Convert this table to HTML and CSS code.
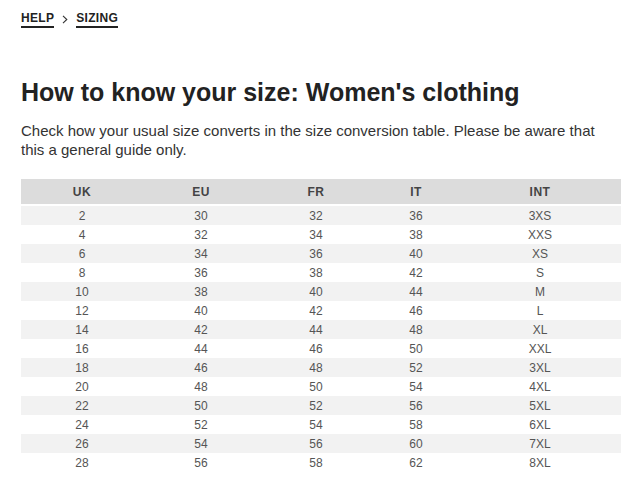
FILE: index.html
```html
<!DOCTYPE html>
<html lang="en">
<head>
<meta charset="utf-8">
<title>Sizing</title>
<link rel="stylesheet" href="styles.css">
</head>
<body>
<div class="page">
  <nav class="crumbs">
    <a class="crumb" href="#">HELP</a>
    <svg class="chev" width="6" height="9" viewBox="0 0 6 9"><path d="M1 0.8 L4.8 4.5 L1 8.2" fill="none" stroke="#333" stroke-width="1.1"/></svg>
    <a class="crumb" href="#">SIZING</a>
  </nav>
  <h1 class="title">How to know your size: Women's clothing</h1>
  <p class="intro">Check how your usual size converts in the size conversion table. Please be aware that this a general guide only.</p>
  <table class="sizes">
    <colgroup><col class="c1"><col class="c2"><col class="c3"><col class="c4"><col class="c5"></colgroup>
    <thead><tr><th>UK</th><th>EU</th><th>FR</th><th>IT</th><th>INT</th></tr></thead>
    <tbody>
      <tr><td>2</td><td>30</td><td>32</td><td>36</td><td>3XS</td></tr>
      <tr><td>4</td><td>32</td><td>34</td><td>38</td><td>XXS</td></tr>
      <tr><td>6</td><td>34</td><td>36</td><td>40</td><td>XS</td></tr>
      <tr><td>8</td><td>36</td><td>38</td><td>42</td><td>S</td></tr>
      <tr><td>10</td><td>38</td><td>40</td><td>44</td><td>M</td></tr>
      <tr><td>12</td><td>40</td><td>42</td><td>46</td><td>L</td></tr>
      <tr><td>14</td><td>42</td><td>44</td><td>48</td><td>XL</td></tr>
      <tr><td>16</td><td>44</td><td>46</td><td>50</td><td>XXL</td></tr>
      <tr><td>18</td><td>46</td><td>48</td><td>52</td><td>3XL</td></tr>
      <tr><td>20</td><td>48</td><td>50</td><td>54</td><td>4XL</td></tr>
      <tr><td>22</td><td>50</td><td>52</td><td>56</td><td>5XL</td></tr>
      <tr><td>24</td><td>52</td><td>54</td><td>58</td><td>6XL</td></tr>
      <tr><td>26</td><td>54</td><td>56</td><td>60</td><td>7XL</td></tr>
      <tr><td>28</td><td>56</td><td>58</td><td>62</td><td>8XL</td></tr>
    </tbody>
  </table>
</div>
</body>
</html>
```
FILE: styles.css
```css
* { box-sizing: border-box; }
html, body { margin: 0; padding: 0; background: #fff; }
body { font-family: "Liberation Sans", Arial, sans-serif; color: #222; }
.page { padding: 12px 19px 0 21px; }
.crumbs { display: flex; align-items: center; gap: 8px; height: 16px; }
.crumb {
  font-size: 12px; font-weight: bold; color: #222; text-decoration: none;
  letter-spacing: 0.3px; border-bottom: 2px solid #222; line-height: 13px; padding-bottom: 1px;
}
.chev { margin: 0 0 1px 0; }
.title { font-size: 25px; font-weight: bold; margin: 50px 0 0 0; line-height: 28px; color: #222; }
.intro { font-size: 15px; line-height: 19px; margin: 15px 0 0 0; color: #333; width: 600px; }
.sizes { margin-top: 20px; width: 600px; border-collapse: separate; border-spacing: 0; table-layout: fixed; }
.c1 { width: 122px; } .c2 { width: 116px; } .c3 { width: 114px; } .c4 { width: 86px; } .c5 { width: 162px; }
.sizes th {
  background: #dcdcdc; height: 27px; font-size: 12px; font-weight: bold; color: #444;
  letter-spacing: 0.5px; text-align: center; border-bottom: 2px solid #fff; padding: 0;
}
.sizes td { height: 19px; font-size: 12px; color: #555; text-align: center; padding: 0; }
.sizes tbody tr:nth-child(odd) td { background: #f2f2f2; }
```
